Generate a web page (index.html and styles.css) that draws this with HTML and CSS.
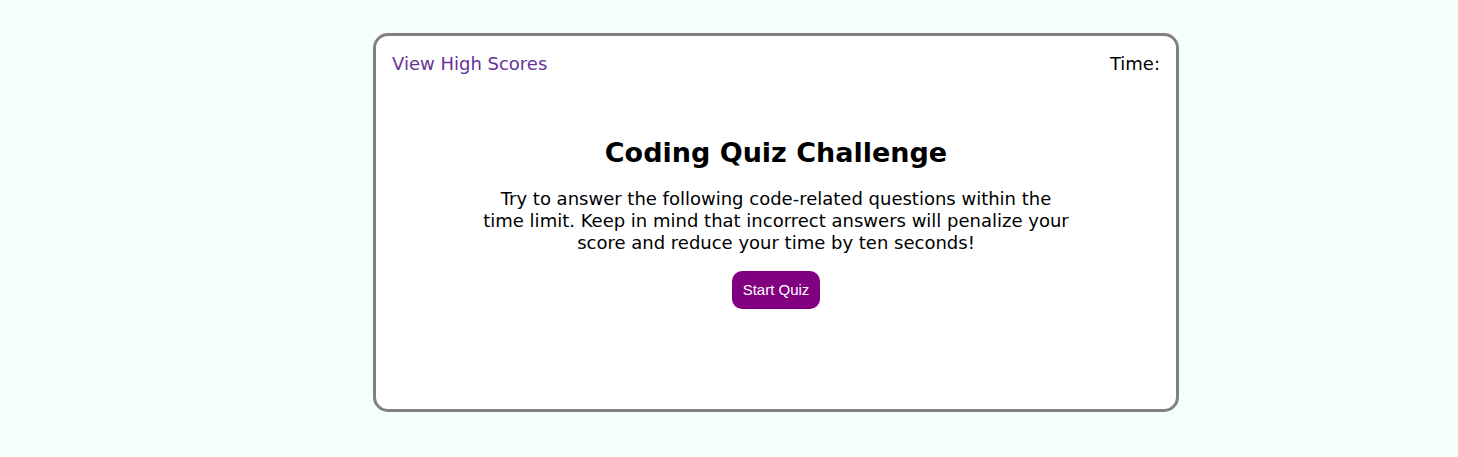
FILE: index.html
```html
<!DOCTYPE html>
<html lang="en">
<head>
<meta charset="utf-8">
<title>Coding Quiz Challenge</title>
<link rel="stylesheet" href="styles.css">
</head>
<body>
<div class="card">
  <header class="topbar">
    <a class="scores-link" href="#scores">View High Scores</a>
    <div class="timer">Time:</div>
  </header>
  <main class="intro">
    <h1 class="title">Coding Quiz Challenge</h1>
    <p class="lead">Try to answer the following code-related questions within the time limit. Keep in mind that incorrect answers will penalize your score and reduce your time by ten seconds!</p>
    <button class="start" type="button">Start Quiz</button>
  </main>
</div>
</body>
</html>
```

FILE: styles.css
```css
* {
  box-sizing: border-box;
}

body {
  margin: 0;
  padding: 33px 16px 45px 110px;
  background: #f5fffa;
  color: #000;
  font-family: Verdana, "DejaVu Sans", sans-serif;
  font-size: 18px;
  line-height: 22px;
}

.card {
  max-width: 806px;
  margin: 0 auto;
  padding: 17px 16px 100px;
  background: #fff;
  border: 3px solid #808080;
  border-radius: 15px;
}

.topbar {
  display: flex;
  justify-content: space-between;
}

.scores-link {
  color: #663399;
  text-decoration: none;
}

.intro {
  display: flex;
  flex-direction: column;
  align-items: center;
  max-width: 592px;
  margin: 60px auto 0;
  text-align: center;
}

.title {
  margin: 0;
  font-size: 27px;
  line-height: 36px;
}

.lead {
  margin: 17px 0;
}

.start {
  padding: 10px 11px;
  background: #800080;
  color: #fff;
  border: 0;
  border-radius: 10px;
  font-family: "Liberation Sans", Arial, sans-serif;
  font-size: 15px;
  line-height: 18px;
}
```
